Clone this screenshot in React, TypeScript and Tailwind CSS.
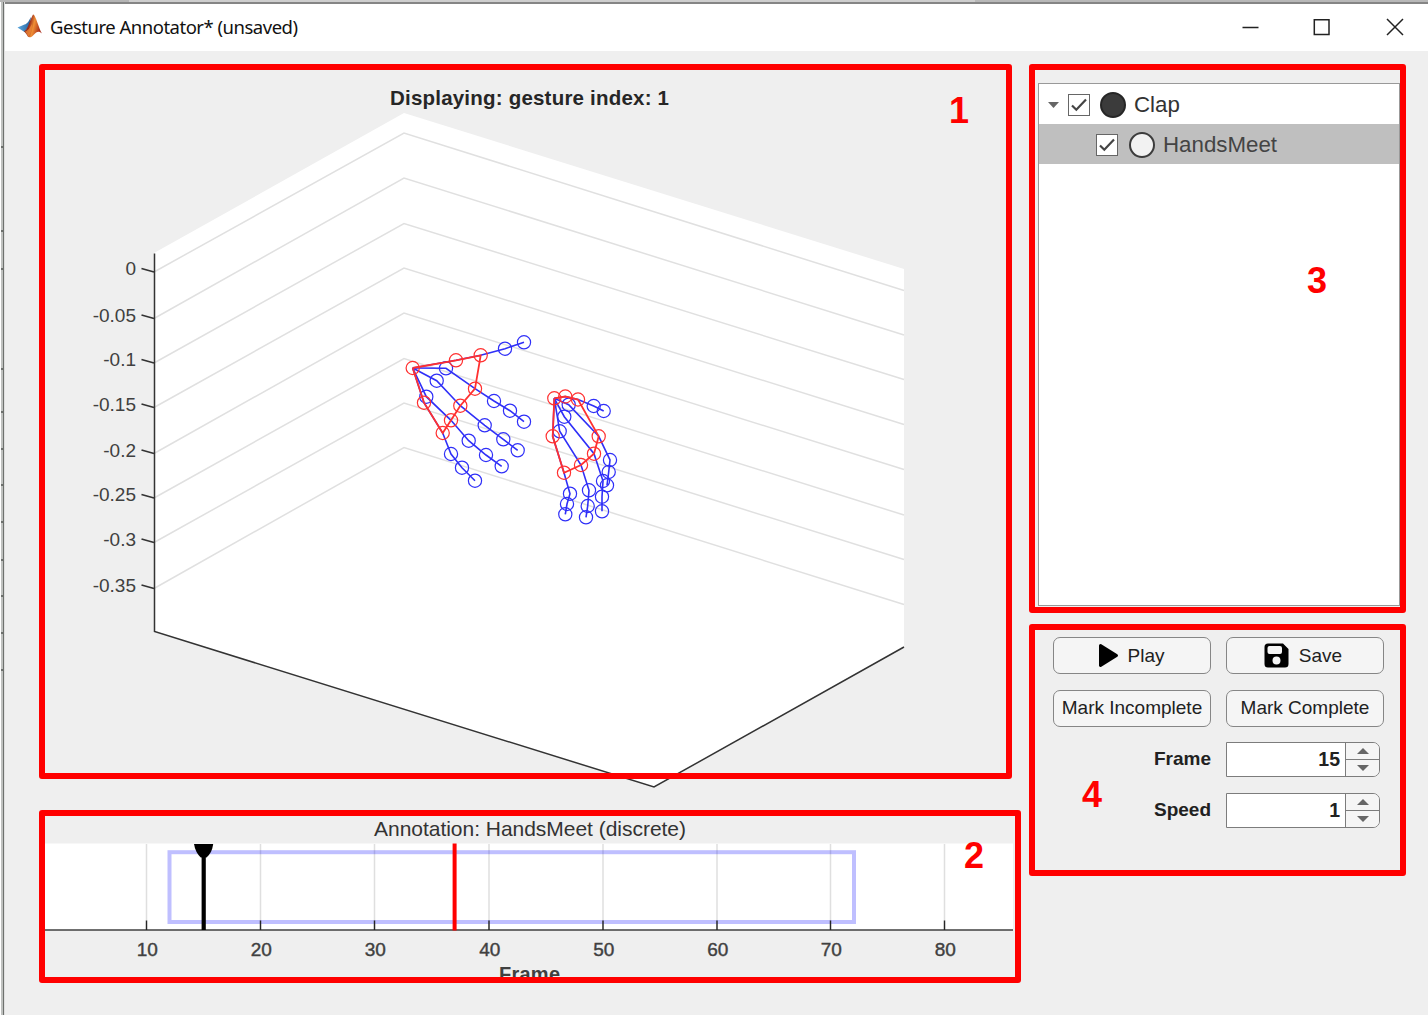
import type { ReactNode } from "react";

type Point = [number, number];

const BLUE = "#2f2ff8";
const RED = "#ff3030";

const leftWrist: Point = [412.7, 368];
const leftFingers: Point[][] = [
  [[456, 360.3], [480.7, 355.3], [505, 348.7], [524, 342.3]],
  [[446, 368.3], [475, 388.7], [494, 401], [510, 410.7], [524, 421.7]],
  [[436.7, 380.7], [460.3, 405.7], [484.7, 425.3], [503.3, 439.3], [517.7, 450.3]],
  [[426.3, 396.7], [451, 420.3], [468.7, 440.7], [486, 455], [501.7, 466.3]],
  [[424, 402.7], [442.7, 433], [451, 454], [462, 467.7], [475, 480.7]],
];
const rightWrist: Point = [554.3, 398.3];
const rightFingers: Point[][] = [
  [[565.3, 396.5], [578, 399.5], [593.7, 406], [603.7, 411]],
  [[568.7, 404.7], [598.7, 436.3], [610, 460], [608.7, 472], [607, 485.3]],
  [[564.3, 416.7], [594, 453.7], [603, 481], [602, 496.7], [602, 511.3]],
  [[559.7, 431.3], [581, 465], [589, 490.3], [587.7, 506], [586, 517.3]],
  [[552.7, 436.3], [564, 472.7], [570, 493.7], [567, 504], [565.3, 514.3]],
];

const toPoints = (pts: Point[]) => pts.map((p) => p.join(",")).join(" ");

function Hand({ wrist, fingers }: { wrist: Point; fingers: Point[][] }) {
  const palm: Point[] = [
    wrist,
    fingers[0][0],
    fingers[0][1],
    fingers[1][1],
    fingers[2][1],
    fingers[3][1],
    fingers[4][1],
    fingers[4][0],
    wrist,
  ];
  const blueJoints = fingers.flatMap((f, i) => f.filter((_, j) => (i === 0 || i === 4 ? j > 1 : j !== 1)));
  return (
    <g fill="none" strokeWidth="1.6">
      {fingers.map((f, i) => (
        <polyline key={i} stroke={BLUE} points={toPoints([wrist, ...f])} />
      ))}
      {blueJoints.map((p) => (
        <circle key={p.join()} cx={p[0]} cy={p[1]} r="6.6" stroke={BLUE} strokeWidth="1.2" />
      ))}
      <polyline stroke={RED} points={toPoints(palm)} strokeWidth="1.8" />
      {palm.slice(1).map((p) => (
        <circle key={p.join()} cx={p[0]} cy={p[1]} r="6.6" stroke={RED} strokeWidth="1.2" />
      ))}
    </g>
  );
}

const zTicks = [
  { label: "0", left: 272, back: 133, right: 290.5, text: 275 },
  { label: "-0.05", left: 318.5, back: 178, right: 335, text: 321.5 },
  { label: "-0.1", left: 363, back: 223.5, right: 379.5, text: 366 },
  { label: "-0.15", left: 407.5, back: 268, right: 424.5, text: 410.5 },
  { label: "-0.2", left: 453.5, back: 313, right: 469.5, text: 456.5 },
  { label: "-0.25", left: 498, back: 358.5, right: 515, text: 501 },
  { label: "-0.3", left: 542.5, back: 403, right: 559.5, text: 545.5 },
  { label: "-0.35", left: 588.5, back: 447.5, right: 604.5, text: 591.5 },
];

function HandsPlot() {
  return (
    <svg className="absolute inset-0 overflow-visible" width="973" height="715" viewBox="39 64 973 715">
      <polygon points="154,253 404,113 904,269 904,647 654,787 154,631" fill="#fff" />
      {zTicks.map((t) => (
        <g key={t.label}>
          <polyline points={`154,${t.left} 404,${t.back} 904,${t.right}`} fill="none" stroke="#e0e0e0" strokeWidth="1.5" />
          <line x1="141.5" y1={t.left - 3.6} x2="154" y2={t.left} stroke="#333" strokeWidth="1.6" />
          <text x="136" y={t.text} textAnchor="end" fontSize="19" fill="#404040">
            {t.label}
          </text>
        </g>
      ))}
      <polyline points="154.5,253.5 154.5,631.5 654,787 904,647" fill="none" stroke="#333" strokeWidth="1.5" />
      <Hand wrist={leftWrist} fingers={leftFingers} />
      <Hand wrist={rightWrist} fingers={rightFingers} />
      <text x="390" y="105" fontSize="20.5" fontWeight="bold" fill="#262626" textLength="279">
        Displaying: gesture index: 1
      </text>
    </svg>
  );
}

const frameTicks = [
  { label: "10", x: 146.5 },
  { label: "20", x: 260.5 },
  { label: "30", x: 374.5 },
  { label: "40", x: 489 },
  { label: "50", x: 603 },
  { label: "60", x: 717 },
  { label: "70", x: 830.5 },
  { label: "80", x: 944.5 },
];

function Timeline() {
  return (
    <svg className="absolute inset-0" width="982" height="173" viewBox="39 810 982 173">
      <rect x="45" y="843.5" width="968" height="86.5" fill="#fff" />
      {frameTicks.map((t) => (
        <line key={t.label} x1={t.x} x2={t.x} y1="844" y2="930" stroke="#dfdfdf" strokeWidth="1.5" />
      ))}
      <rect x="169.5" y="852.2" width="684.5" height="69.8" fill="none" stroke="#0000ff" strokeOpacity="0.25" strokeWidth="4" />
      <line x1="45" x2="1013" y1="930" y2="930" stroke="#404040" strokeWidth="1.6" />
      {frameTicks.map((t) => (
        <g key={t.label}>
          <line x1={t.x} x2={t.x} y1="920.5" y2="930" stroke="#262626" strokeWidth="1.4" />
          <text x={t.x + 0.8} y="956" textAnchor="middle" fontSize="19" fill="#404040" stroke="#404040" strokeWidth="0.4">
            {t.label}
          </text>
        </g>
      ))}
      <line x1="203.7" x2="203.7" y1="844" y2="930" stroke="#000" strokeWidth="4.2" />
      <path d="M194 844H213.2C212.500 850 210 854.500 206.500 857.500H200.800C197.500 854.500 195 850 194 844Z" fill="#000" />
      <line x1="454.6" x2="454.6" y1="843.5" y2="930.5" stroke="#ff0000" strokeWidth="4" />
      <text x="374" y="835.500" fontSize="21" fill="#333" textLength="312">
        Annotation: HandsMeet (discrete)
      </text>
      <text x="499" y="981" fontSize="20" fontWeight="bold" fill="#404040" textLength="61">
        Frame
      </text>
    </svg>
  );
}

function Outline() {
  return <div className="pointer-events-none absolute inset-0 rounded-[3px] border-6 border-[#ff0000]" />;
}

function Callout({ className, children }: { className: string; children: ReactNode }) {
  return <span className={`absolute text-[36px] leading-[36px] font-bold text-[#ff0000] ${className}`}>{children}</span>;
}

function Check() {
  return (
    <span className="flex size-[22px] shrink-0 items-center justify-center border border-[#666] bg-white">
      <svg width="18" height="18" viewBox="0 0 18 18" fill="none" stroke="#444" strokeWidth="2.200">
        <path d="M2 9.500L6.300 13.700L16 3.500" />
      </svg>
    </span>
  );
}

function Button({ icon, children }: { icon?: ReactNode; children: ReactNode }) {
  return (
    <button className="flex h-[37px] w-[158px] items-center justify-center rounded-[7px] border border-[#868686] bg-[#f5f5f5] text-[19px] leading-[22px] whitespace-nowrap text-[#212121]">
      {icon}
      {children}
    </button>
  );
}

function Spinner({ value }: { value: string }) {
  return (
    <div className="flex h-[35px] w-[154px] overflow-hidden rounded-r-[7px] border border-[#7c7c7c] bg-white">
      <span className="flex-1 pr-[5px] text-right text-[19.5px] leading-[33px] font-bold text-[#212121]">{value}</span>
      <span className="flex w-[34px] flex-col border-l border-[#7c7c7c] bg-[#f5f5f5]">
        <span className="flex flex-1 items-center justify-center border-b border-[#7c7c7c]">
          <svg width="12" height="6" viewBox="0 0 12 6">
            <path d="M0 6L6 0L12 6Z" fill="#666" />
          </svg>
        </span>
        <span className="flex flex-1 items-center justify-center">
          <svg width="12" height="6" viewBox="0 0 12 6">
            <path d="M0 0H12L6 6Z" fill="#666" />
          </svg>
        </span>
      </span>
    </div>
  );
}

function MatlabLogo() {
  return (
    <svg className="mr-[7px] mb-[3px]" width="26" height="24" viewBox="0 0 26 24">
      <defs>
        <linearGradient id="peak" x1="0" x2="1" y1="0" y2="0.3">
          <stop offset="0" stopColor="#5b1f22" />
          <stop offset="0.4" stopColor="#9c2f1c" />
          <stop offset="0.62" stopColor="#f09035" />
          <stop offset="1" stopColor="#a82a17" />
        </linearGradient>
        <linearGradient id="slope" x1="0" x2="1" y1="0" y2="0">
          <stop offset="0" stopColor="#5da9df" />
          <stop offset="1" stopColor="#24609d" />
        </linearGradient>
      </defs>
      <path d="M0.500 13.500L7.500 10.500C10.500 10 12 6.500 14 3L13 11L7.500 18Z" fill="url(#slope)" />
      <path d="M7 17.500C10.500 16 12.500 7 16 0.500C18.500 0 21.500 14 25 19.500C22 16.500 19.500 17.500 17 20.500C14.500 23.500 12 24 10.800 22.500C9.800 20.500 8.500 18.500 7 17.500Z" fill="url(#peak)" />
      <path d="M8 17.500C11 17 13 13.500 15 10C15.500 14 13.500 20 11.500 22.500Z" fill="#f08a35" fillOpacity="0.75" />
    </svg>
  );
}

const rimMarks = [
  "h-[84px]",
  "h-[38px]",
  "h-[100px]",
  "h-[43px]",
  "h-[37px]",
  "h-[36px]",
  "h-[37px]",
  "h-[38px]",
  "h-[36px]",
  "h-[37px]",
  "h-[37px]",
];

export default function App() {
  return (
    <div className="h-[1020px] w-[1428px] overflow-hidden bg-white font-['Liberation_Sans',Arial,sans-serif]">
      <div className="flex h-[1015px] flex-col bg-[#efefef]">
        <div className="flex h-[2px] shrink-0 bg-[#cecece]">
          <div className="w-[129px] bg-[#b5b5b5]" />
          <div className="flex-1" />
          <div className="w-[453px] bg-[#b8b8b8]" />
        </div>
        <div className="flex min-h-0 flex-1">
          <div className="flex w-[5px] shrink-0 flex-col border-r border-[#e0e0e0] bg-[linear-gradient(to_right,#fff_1px,#bfc1bf_1px,#bfc1bf_3px,#6d706d_3px)] pl-px">
            <div className="h-[146px] border-b-2 border-[#6d706d]" />
            {rimMarks.map((m, i) => (
              <div key={i} className={`${m} border-b-2 border-[#6d706d]`} />
            ))}
          </div>
          <div className="flex min-w-0 flex-1 flex-col">
            <header className="flex h-[49px] shrink-0 items-center border-t-2 border-[#858585] bg-white pl-[12px]">
              <MatlabLogo />
              <h1 className="mb-[2px] font-['Noto_Sans','Open_Sans',sans-serif] text-[18.5px] leading-[24px] tracking-[-0.49px] whitespace-nowrap text-[#111]">
                Gesture Annotator* (unsaved)
              </h1>
              <div className="flex-1" />
              <svg className="mb-[2px]" width="186" height="18" viewBox="1242 17 186 18" fill="none" stroke="#222" strokeWidth="1.5">
                <path d="M1242.500 26.500H1258.500M1314.300 18.700H1329V33.500H1314.300ZM1387 18L1403 34M1403 18L1387 34" />
              </svg>
            </header>
            <main className="flex gap-[8px] pt-[13px] pl-[34px]">
              <div className="flex w-[982px] flex-col gap-[31px]">
                <section className="relative h-[715px] w-[973px]">
                  <HandsPlot />
                  <Outline />
                  <Callout className="top-[29px] left-[910px]">1</Callout>
                </section>
                <section className="relative h-[173px]">
                  <Timeline />
                  <Outline />
                  <Callout className="top-[28px] left-[925px]">2</Callout>
                </section>
              </div>
              <div className="flex w-[377px] flex-col gap-[11px]">
                <section className="relative h-[549px] px-[9px] pt-[19px]">
                  <div className="h-[523px] w-[362px] border-[1.5px] border-[#999] bg-white text-[22.3px] leading-[26px]">
                    <div className="flex h-[40px] items-center pt-[2px] pl-[9px] text-[#333]">
                      <svg className="mr-[9px]" width="11" height="6" viewBox="0 0 11 6">
                        <path d="M0 0H11L5.500 6Z" fill="#666" />
                      </svg>
                      <Check />
                      <span className="mr-[8px] ml-[10px] size-[26px] rounded-full border-2 border-[#262626] bg-[#3b3b3b]" />
                      Clap
                    </div>
                    <div className="flex h-[40px] items-center bg-[#bfbfbf] pt-px pl-[57px] text-[#444]">
                      <Check />
                      <span className="mr-[8px] ml-[11px] size-[26px] rounded-full border-2 border-[#3c3c3c] bg-[#f2f2f2]" />
                      HandsMeet
                    </div>
                  </div>
                  <Outline />
                  <Callout className="top-[199px] left-[278px]">3</Callout>
                </section>
                <section className="relative h-[252px] pt-[13px] pl-[24px]">
                  <div className="grid grid-cols-[157px_157px] gap-x-[16px] gap-y-[15.5px]">
                    <Button
                      icon={
                        <svg className="mr-[9px] -ml-[2px]" width="21" height="25" viewBox="0 0 21 25">
                          <path d="M2.500 2.500L18.500 12.500L2.500 22.500Z" stroke="#000" strokeWidth="3" strokeLinejoin="round" />
                        </svg>
                      }
                    >
                      Play
                    </Button>
                    <Button
                      icon={
                        <svg className="mr-[10px] -ml-[4px]" width="25" height="25" viewBox="0 0 25 25">
                          <path
                            fillRule="evenodd"
                            d="M4 .5H19L24.500 6V21Q24.500 24.500 21 24.500H4Q.5 24.500 .5 21V4Q.5 .5 4 .5ZM5.500 3Q3.500 3 3.500 5V9Q3.500 11 5.500 11H16Q18 11 18 9V5Q18 3 16 3ZM12.500 13.500A4 4 0 1 0 12.500 21.500A4 4 0 1 0 12.500 13.500Z"
                          />
                        </svg>
                      }
                    >
                      Save
                    </Button>
                    <Button>Mark Incomplete</Button>
                    <Button>Mark Complete</Button>
                    <label className="-mr-px text-right text-[19px] leading-[34px] font-bold text-[#212121]">Frame</label>
                    <Spinner value="15" />
                    <label className="-mr-px text-right text-[19px] leading-[34px] font-bold text-[#212121]">Speed</label>
                    <Spinner value="1" />
                  </div>
                  <Outline />
                  <Callout className="top-[153px] left-[53px]">4</Callout>
                </section>
              </div>
            </main>
          </div>
        </div>
      </div>
    </div>
  );
}
